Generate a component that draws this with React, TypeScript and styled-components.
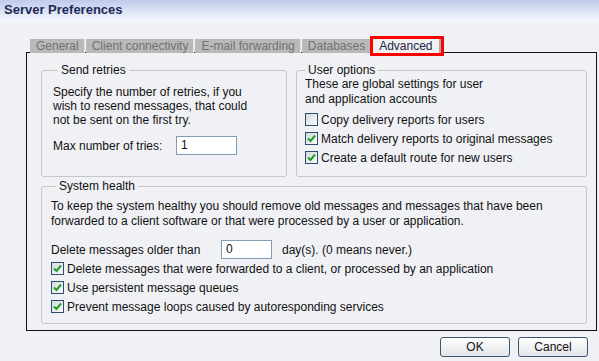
import React from "react"
import styled, { createGlobalStyle } from "styled-components"

const GlobalStyle = createGlobalStyle`
    html, body {
        margin: 0;
        padding: 0;
        background: #f0f1f5;
    }
    body {
        font-family: "Liberation Sans", Arial, sans-serif;
        font-size: 12px;
        color: #111;
    }
`

const Window = styled.div`
    width: 599px;
    height: 361px;
    display: flex;
    flex-direction: column;
    background: #f0f1f5;
    overflow: hidden;
`
const TitleBar = styled.div`
    height: 22px;
    flex: none;
    display: flex;
    align-items: center;
    padding-left: 4px;
    padding-bottom: 4px;
    box-sizing: border-box;
    background: linear-gradient(#bfcbeb, #f8f9fd);
    font-size: 13px;
    font-weight: bold;
    color: #1d2a57;
`
const Content = styled.div`
    padding: 17px 2px 0 26px;
    display: flex;
    flex-direction: column;
`
const TabStrip = styled.div`
    display: flex;
    align-items: flex-end;
    gap: 1px;
    padding-left: 4px;
    margin-bottom: -1px;
    position: relative;
    z-index: 1;
`
const Tab = styled.div<{ $active?: boolean }>`
    height: 14px;
    line-height: 14px;
    padding: ${p => (p.$active ? "0 6px" : "0 5px 0 6px")};
    margin-left: ${p => (p.$active ? "1px" : "0")};
    white-space: nowrap;
    background: ${p => (p.$active ? "#f0f1f5" : "#b9b9b9")};
    color: ${p => (p.$active ? "#1d2440" : "#717171")};
    border-right: ${p => (p.$active ? "2px solid #a9a9a9" : "1px solid #e2e2e2")};
    outline: ${p => (p.$active ? "3px solid #ff0000" : "none")};
    outline-offset: 0;
`
const Panel = styled.div`
    height: 279px;
    box-sizing: border-box;
    border: 1px solid #111;
    padding: 10px 9px 6px 14px;
    display: flex;
    flex-direction: column;
    gap: 2px;
`
const TopRow = styled.div`
    display: grid;
    grid-template-columns: 246px 291px;
    column-gap: 9px;
`
const Group = styled.fieldset<{ $pad: string }>`
    margin: 0;
    min-width: 0;
    border: 1px solid #c5c7cb;
    border-radius: 3px;
    padding: ${p => p.$pad};
    display: flex;
    flex-direction: column;
`
const Legend = styled.legend<{ $offset: number }>`
    margin-left: ${p => p.$offset}px;
    padding: 0 3px;
    line-height: 14px;
    color: #111;
`
const Note = styled.div<{ $lh: number }>`
    line-height: ${p => p.$lh}px;
    color: #111;
`
const FieldRow = styled.div<{ $top: number }>`
    display: flex;
    align-items: center;
    height: 19px;
    margin-top: ${p => p.$top}px;
`
const FieldLabel = styled.span<{ $w: number }>`
    width: ${p => p.$w}px;
    flex: none;
`
const TextBox = styled.div<{ $w: number }>`
    width: ${p => p.$w}px;
    height: 19px;
    box-sizing: border-box;
    border: 1px solid #7f9db9;
    background: #fff;
    padding-left: 4px;
    line-height: 17px;
`
const Suffix = styled.span`
    margin-left: 10px;
`
const CheckRow = styled.div`
    display: flex;
    align-items: center;
    height: 19px;
    gap: 3px;
`
const Box = styled.span`
    width: 13px;
    height: 13px;
    flex: none;
    box-sizing: border-box;
    border: 1px solid #2f4c6f;
    background: linear-gradient(135deg, #d6d8dc, #fbfbfc);
    display: flex;
    align-items: center;
    justify-content: center;
`
const Checks = styled.div<{ $top: number }>`
    margin-top: ${p => p.$top}px;
    display: flex;
    flex-direction: column;
`
const ButtonRow = styled.div`
    display: flex;
    justify-content: flex-end;
    gap: 8px;
    padding-right: 9px;
    margin-top: 6px;
`
const Button = styled.button`
    width: 70px;
    height: 20px;
    border: 1px solid #3b5676;
    border-radius: 3px;
    background: linear-gradient(#ffffff, #e4e5e8);
    font-family: "Liberation Sans", Arial, sans-serif;
    font-size: 12px;
    color: #111;
    padding: 0;
`

function Check({ checked, label }: { checked?: boolean; label: string }) {
    return (
        <CheckRow>
            <Box>
                {checked && (
                    <svg width="9" height="9" viewBox="0 0 9 9">
                        <path d="M1 4.5 L3.5 7 L8 1.5" fill="none" stroke="#1fa01f" strokeWidth="2" />
                    </svg>
                )}
            </Box>
            <span>{label}</span>
        </CheckRow>
    )
}

const tabs = ["General", "Client connectivity", "E-mail forwarding", "Databases", "Advanced"]

export default function App() {
    return (
        <Window>
            <GlobalStyle />
            <TitleBar>Server Preferences</TitleBar>
            <Content>
                <TabStrip>
                    {tabs.map(t => (
                        <Tab key={t} $active={t === "Advanced"}>{t}</Tab>
                    ))}
                </TabStrip>
                <Panel>
                    <TopRow>
                        <Group $pad="8px 10px 9px 11px">
                            <Legend $offset={5}>Send retries</Legend>
                            <Note $lh={14}>
                                Specify the number of retries, if you<br />
                                wish to resend messages, that could<br />
                                not be sent on the first try.
                            </Note>
                            <FieldRow $top={9}>
                                <FieldLabel $w={123}>Max number of tries:</FieldLabel>
                                <TextBox $w={61}>1</TextBox>
                            </FieldRow>
                        </Group>
                        <Group $pad="0 8px 9px 8px">
                            <Legend $offset={0}>User options</Legend>
                            <Note $lh={15}>
                                These are global settings for user<br />
                                and application accounts
                            </Note>
                            <Checks $top={3}>
                                <Check label="Copy delivery reports for users" />
                                <Check checked label="Match delivery reports to original messages" />
                                <Check checked label="Create a default route for new users" />
                            </Checks>
                        </Group>
                    </TopRow>
                    <Group $pad="6px 9px 0 9px" style={{ flex: 1 }}>
                        <Legend $offset={5}>System health</Legend>
                        <Note $lh={15}>
                            To keep the system healthy you should remove old messages and messages that have been<br />
                            forwarded to a client software or that were processed by a user or application.
                        </Note>
                        <FieldRow $top={11}>
                            <FieldLabel $w={170}>Delete messages older than</FieldLabel>
                            <TextBox $w={51}>0</TextBox>
                            <Suffix>day(s). (0 means never.)</Suffix>
                        </FieldRow>
                        <Checks $top={0}>
                            <Check checked label="Delete messages that were forwarded to a client, or processed by an application" />
                            <Check checked label="Use persistent message queues" />
                            <Check checked label="Prevent message loops caused by autoresponding services" />
                        </Checks>
                    </Group>
                </Panel>
                <ButtonRow>
                    <Button>OK</Button>
                    <Button>Cancel</Button>
                </ButtonRow>
            </Content>
        </Window>
    )
}
